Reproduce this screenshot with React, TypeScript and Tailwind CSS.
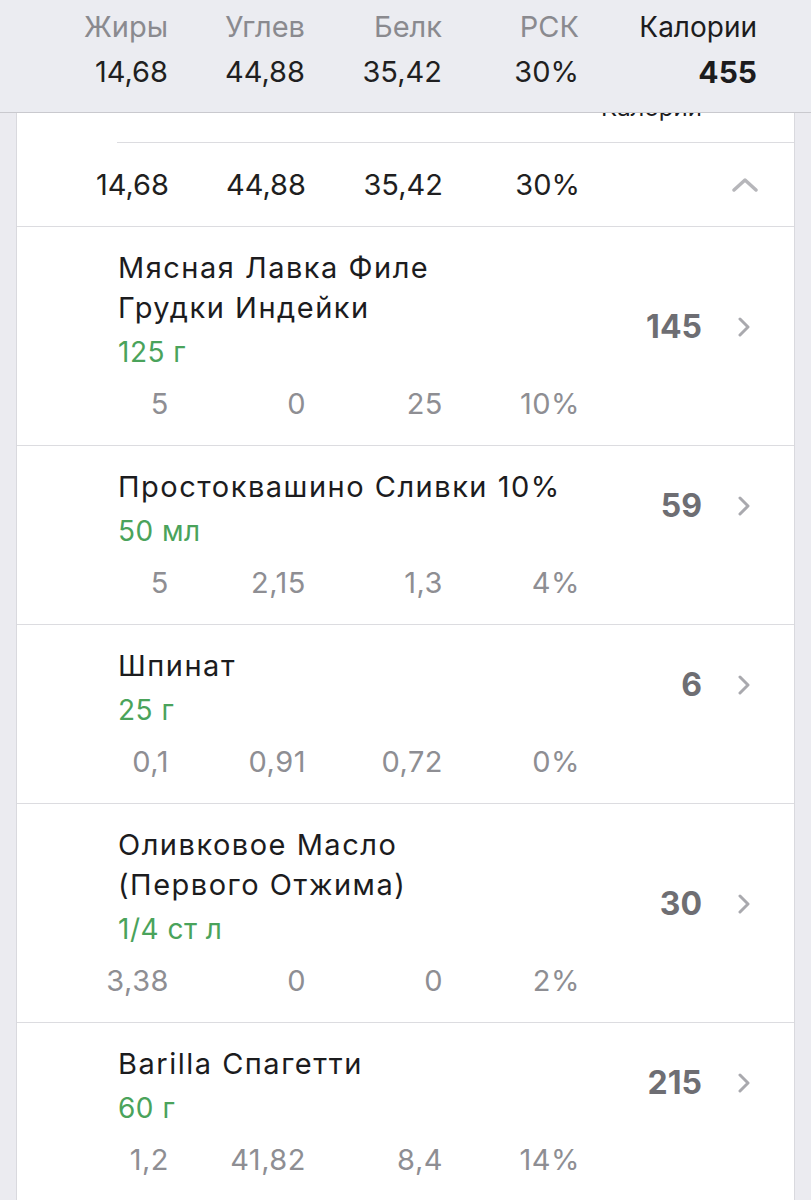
import React from 'react'

type Food = {
  name: string[]
  amount: string
  kcal: string
  macros: [string, string, string, string]
}

const foods: Food[] = [
  { name: ['Мясная Лавка Филе', 'Грудки Индейки'], amount: '125 г', kcal: '145', macros: ['5', '0', '25', '10%'] },
  { name: ['Простоквашино Сливки 10%'], amount: '50 мл', kcal: '59', macros: ['5', '2,15', '1,3', '4%'] },
  { name: ['Шпинат'], amount: '25 г', kcal: '6', macros: ['0,1', '0,91', '0,72', '0%'] },
  { name: ['Оливковое Масло', '(Первого Отжима)'], amount: '1/4 ст л', kcal: '30', macros: ['3,38', '0', '0', '2%'] },
  { name: ['Barilla Спагетти'], amount: '60 г', kcal: '215', macros: ['1,2', '41,82', '8,4', '14%'] },
]

const labels = ['Жиры', 'Углев', 'Белк', 'РСК']
const totals = ['14,68', '44,88', '35,42', '30%']

function ChevronRight() {
  return (
    <svg width="12" height="20" viewBox="0 0 12 20" fill="none">
      <polyline points="2,2 10,10 2,18" stroke="#a9a9ae" strokeWidth="3" strokeLinecap="round" strokeLinejoin="round" />
    </svg>
  )
}

function ChevronUp() {
  return (
    <svg width="26" height="16" viewBox="0 0 26 16" fill="none">
      <polyline points="2,13 13,3 24,13" stroke="#b6b6ba" strokeWidth="3.5" strokeLinecap="round" strokeLinejoin="round" />
    </svg>
  )
}

function MacroRow({ values, className }: { values: string[]; className: string }) {
  return (
    <div className={`flex pl-[15px] ${className}`}>
      {values.map((v, i) => (
        <div key={i} className="w-[137px] text-right">{v}</div>
      ))}
    </div>
  )
}

function FoodRow({ food }: { food: Food }) {
  return (
    <div className="border-b border-[#dcdce0] pt-[21px] pb-[13px]">
      <div className="flex items-end">
        <div className="flex-1 pl-[101px]">
          {food.name.map((line) => (
            <div key={line} className="whitespace-nowrap text-[29px] leading-[40px] tracking-[1.5px] text-[#1c1c1e]">{line}</div>
          ))}
          <div className="text-[28px] leading-[48px] tracking-[0.5px] text-[#4aa35b]">{food.amount}</div>
        </div>
        <div className="mb-[29px] flex items-center pr-[44px]">
          <span className="text-[32px] font-bold leading-[40px] text-[#6e6e73]">{food.kcal}</span>
          <span className="ml-[36px] flex"><ChevronRight /></span>
        </div>
      </div>
      <MacroRow values={food.macros} className="text-[29px] leading-[56px] tracking-[0.5px] text-[#8e8e93]" />
    </div>
  )
}

export default function App() {
  return (
    <div className="min-h-screen bg-[#ebebf0] font-['Inter',sans-serif]">
      {/* Sticky totals header */}
      <div className="border-b border-[#c9c9ce] bg-[#ebecf1] pt-[9px] pb-[13px]">
        <div className="flex pl-[31px] pr-[54px] text-[29px] leading-[36px]">
          {labels.map((l) => (
            <div key={l} className="w-[137px] text-right text-[#8a8a8f]">{l}</div>
          ))}
          <div className="flex-1 text-right text-[28px] text-[#1c1c1e]">Калории</div>
        </div>
        <div className="flex pl-[31px] pr-[54px] text-[29px] leading-[54px] text-[#1f1f21]">
          {totals.map((t, i) => (
            <div key={i} className="w-[137px] text-right">{t}</div>
          ))}
          <div className="flex-1 text-right text-[30px] font-bold text-[#1c1c1e]">455</div>
        </div>
      </div>

      {/* Card */}
      <div className="mx-[16px] border-x border-[#d9d9de] bg-white">
        <div className="h-[29px] overflow-hidden pl-[584px]">
          <div className="-mt-[17px] text-[24px] leading-[24px] text-[#1c1c1e]">Калории</div>
        </div>
        <div className="ml-[100px] border-t border-[#dcdce0]" />
        <div className="flex h-[84px] items-center border-b border-[#dcdce0]">
          <MacroRow values={totals} className="flex-1 text-[29px] text-[#1f1f21]" />
          <span className="mr-[36px] flex"><ChevronUp /></span>
        </div>
        {foods.map((f) => (
          <FoodRow key={f.kcal} food={f} />
        ))}
      </div>
    </div>
  )
}
